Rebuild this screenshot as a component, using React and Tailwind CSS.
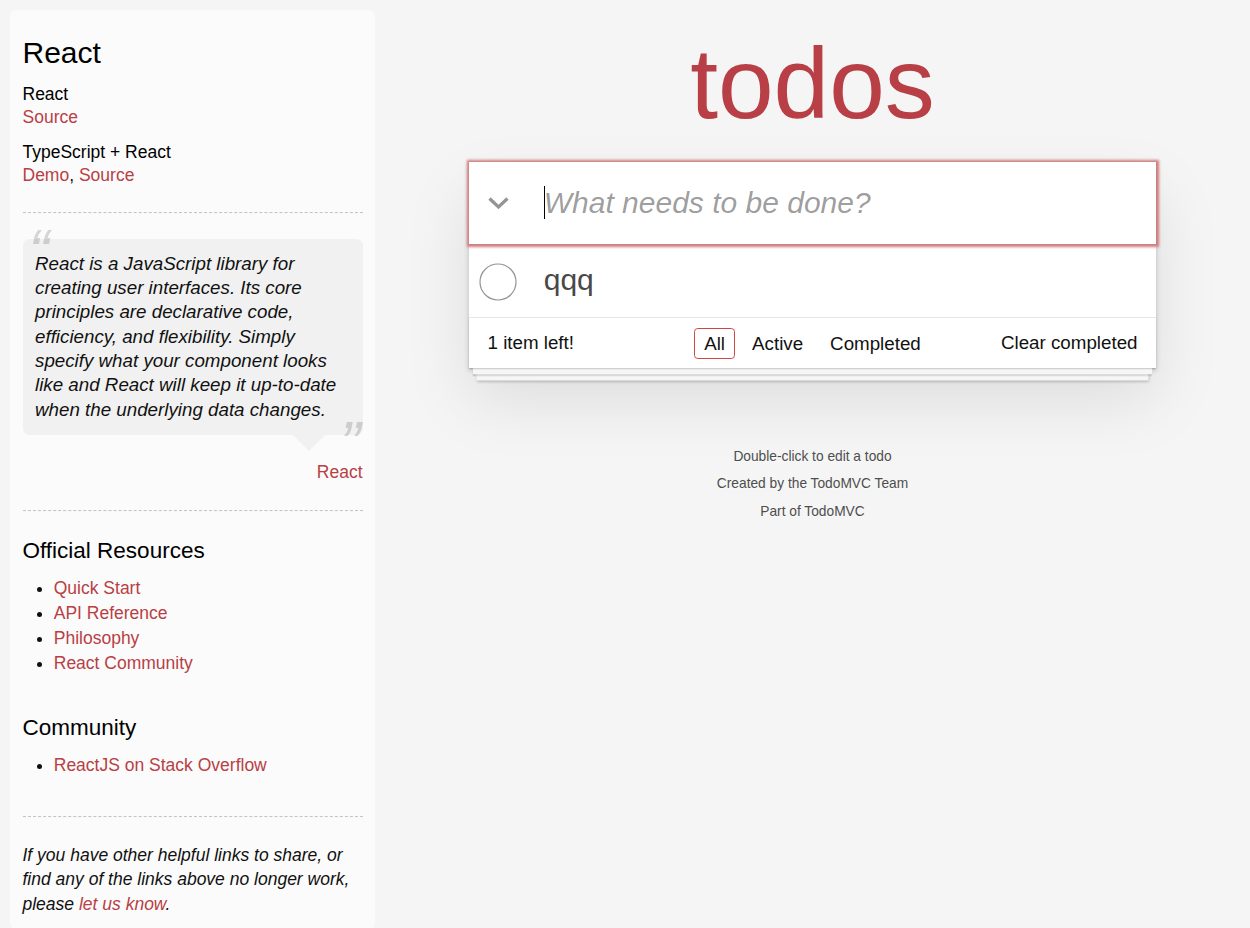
import React from 'react';

const resources = ['Quick Start', 'API Reference', 'Philosophy', 'React Community'];

function Rule() {
  return <hr className="my-[25px] h-0 border-x-0 border-y border-dashed border-t-[#c5c5c5] border-b-[#f7f7f7]" />;
}

function Sidebar() {
  return (
    <aside className="mt-[10px] ml-[10px] w-[365px] shrink-0 self-start rounded-[6.25px] bg-white/60 p-[12.5px] text-[17.5px] leading-[24.5px] text-[#111]">
      <header>
        <h3 className="my-[12.5px] text-[30px] leading-[36px] text-black">React</h3>
        <h5 className="mt-[12.5px] text-[17.5px] leading-[21px] text-black">React</h5>
        <a href="#" className="text-[#b83f45]">Source</a>
        <h5 className="mt-[12.5px] text-[17.5px] leading-[21px] text-black">TypeScript + React</h5>
        <a href="#" className="text-[#b83f45]">Demo</a>, <a href="#" className="text-[#b83f45]">Source</a>
      </header>

      <Rule />

      {/* quote bubble, marks drawn as pseudo-elements like the original learn.css */}
      <div>
        <blockquote className="relative rounded-[6.25px] bg-black/[0.04] p-[12.5px]">
          <p className="text-[18.75px] leading-[1.3] italic before:absolute before:-top-[3px] before:left-[6px] before:text-[62.5px] before:leading-[30px] before:text-black/15 before:content-['“'] after:absolute after:-bottom-[23px] after:right-[2px] after:text-[62.5px] after:leading-[30px] after:text-black/15 after:content-['”']">
            React is a JavaScript library for creating user interfaces. Its core principles are declarative code,
            efficiency, and flexibility. Simply specify what your component looks like and React will keep it
            up-to-date when the underlying data changes.
          </p>
          <div className="absolute top-full right-[37.5px] border-[16.25px] border-transparent border-t-black/[0.04]" />
        </blockquote>
        <div className="pt-[25.5px] text-right">
          <a href="#" className="text-[#b83f45]">React</a>
        </div>
      </div>

      <Rule />

      <h4 className="my-[12.5px] text-[22.5px] leading-[27px] text-black">Official Resources</h4>
      <ul className="mb-[37.5px] ml-[31.25px] list-disc">
        {resources.map((r) => (
          <li key={r} className="leading-[25px]">
            <a href="#" className="text-[#b83f45]">{r}</a>
          </li>
        ))}
      </ul>

      <h4 className="my-[12.5px] text-[22.5px] leading-[27px] text-black">Community</h4>
      <ul className="mb-[37.5px] ml-[31.25px] list-disc">
        <li className="leading-[25px]">
          <a href="#" className="text-[#b83f45]">ReactJS on Stack Overflow</a>
        </li>
      </ul>

      <footer>
        <Rule />
        <em>
          If you have other helpful links to share, or find any of the links above no longer work, please{' '}
          <a href="#" className="text-[#b83f45]">let us know</a>.
        </em>
      </footer>
    </aside>
  );
}

function TodoApp() {
  return (
    <main className="ml-[93.75px] w-[687.5px] shrink-0">
      <h1 className="mt-[33.35px] text-center text-[100px] leading-[100px] font-extralight text-[#b83f45]">todos</h1>

      <section className="mt-[29.15px] bg-white shadow-[0_2.5px_5px_0_rgba(0,0,0,0.2),0_31.25px_62.5px_0_rgba(0,0,0,0.1)]">
        <header className="relative z-10 flex h-[81.25px] items-center bg-white shadow-[0_0_2.5px_2.5px_#cf7d7d]">
          <div className="flex w-[75px] shrink-0 pl-[18.75px]">
            <svg width="21" height="12" viewBox="0 0 21 12" fill="none">
              <polyline points="1.5,1.5 10.5,10 19.5,1.5" stroke="#949494" strokeWidth="3.2" />
            </svg>
          </div>
          {/* text caret */}
          <span className="absolute top-[24px] left-[75px] h-[33px] w-px bg-black" />
          <input
            placeholder="What needs to be done?"
            className="h-full min-w-0 flex-1 bg-transparent pr-[20px] text-[30px] text-[#111] outline-none placeholder:italic placeholder:text-black/40"
          />
        </header>

        <ul>
          <li className="flex items-center">
            <div className="flex w-[75px] shrink-0 pt-[4px] pl-[10.25px]">
              <svg width="38" height="38" viewBox="0 0 38 38" fill="none">
                <circle cx="19" cy="19" r="18" stroke="#949494" strokeWidth="1.2" />
              </svg>
            </div>
            <label className="py-[18.75px] text-[30px] leading-[36px] text-[#484848]">qqq</label>
          </li>
        </ul>

        <footer className="grid h-[51.25px] grid-cols-[1fr_auto_1fr] items-center border-t-[1.25px] border-[#e6e6e6] px-[18.75px] text-[18.75px] text-[#111] shadow-[0_1.25px_1.25px_rgba(0,0,0,0.2),0_10px_0_-3.75px_#f6f6f6,0_11.25px_1.25px_-3.75px_rgba(0,0,0,0.2),0_20px_0_-7.5px_#f6f6f6,0_21.25px_2.5px_-7.5px_rgba(0,0,0,0.2)]">
          <span className="text-left">1 item left!</span>
          <ul className="flex">
            <li>
              <a href="#" className="mx-[3.75px] inline-block rounded-[3.75px] border-[1.25px] border-[#ce4646] px-[8.75px] py-[3.75px] leading-[21px]">All</a>
            </li>
            <li>
              <a href="#" className="mx-[3.75px] inline-block rounded-[3.75px] border-[1.25px] border-transparent px-[8.75px] py-[3.75px] leading-[21px]">Active</a>
            </li>
            <li>
              <a href="#" className="mx-[3.75px] inline-block rounded-[3.75px] border-[1.25px] border-transparent px-[8.75px] py-[3.75px] leading-[21px]">Completed</a>
            </li>
          </ul>
          <button className="justify-self-end">Clear completed</button>
        </footer>
      </section>

      <footer className="mt-[81.25px] text-center text-[13.75px] leading-none text-[#4d4d4d] [text-shadow:0_1px_0_rgba(255,255,255,0.5)]">
        <p className="my-[13.75px]">Double-click to edit a todo</p>
        <p className="my-[13.75px]">Created by the TodoMVC Team</p>
        <p className="my-[13.75px]">Part of TodoMVC</p>
      </footer>
    </main>
  );
}

export default function App() {
  return (
    <div className="flex min-h-screen bg-[#f5f5f5] font-['Liberation_Sans',Arial,sans-serif]">
      <Sidebar />
      <TodoApp />
    </div>
  );
}
